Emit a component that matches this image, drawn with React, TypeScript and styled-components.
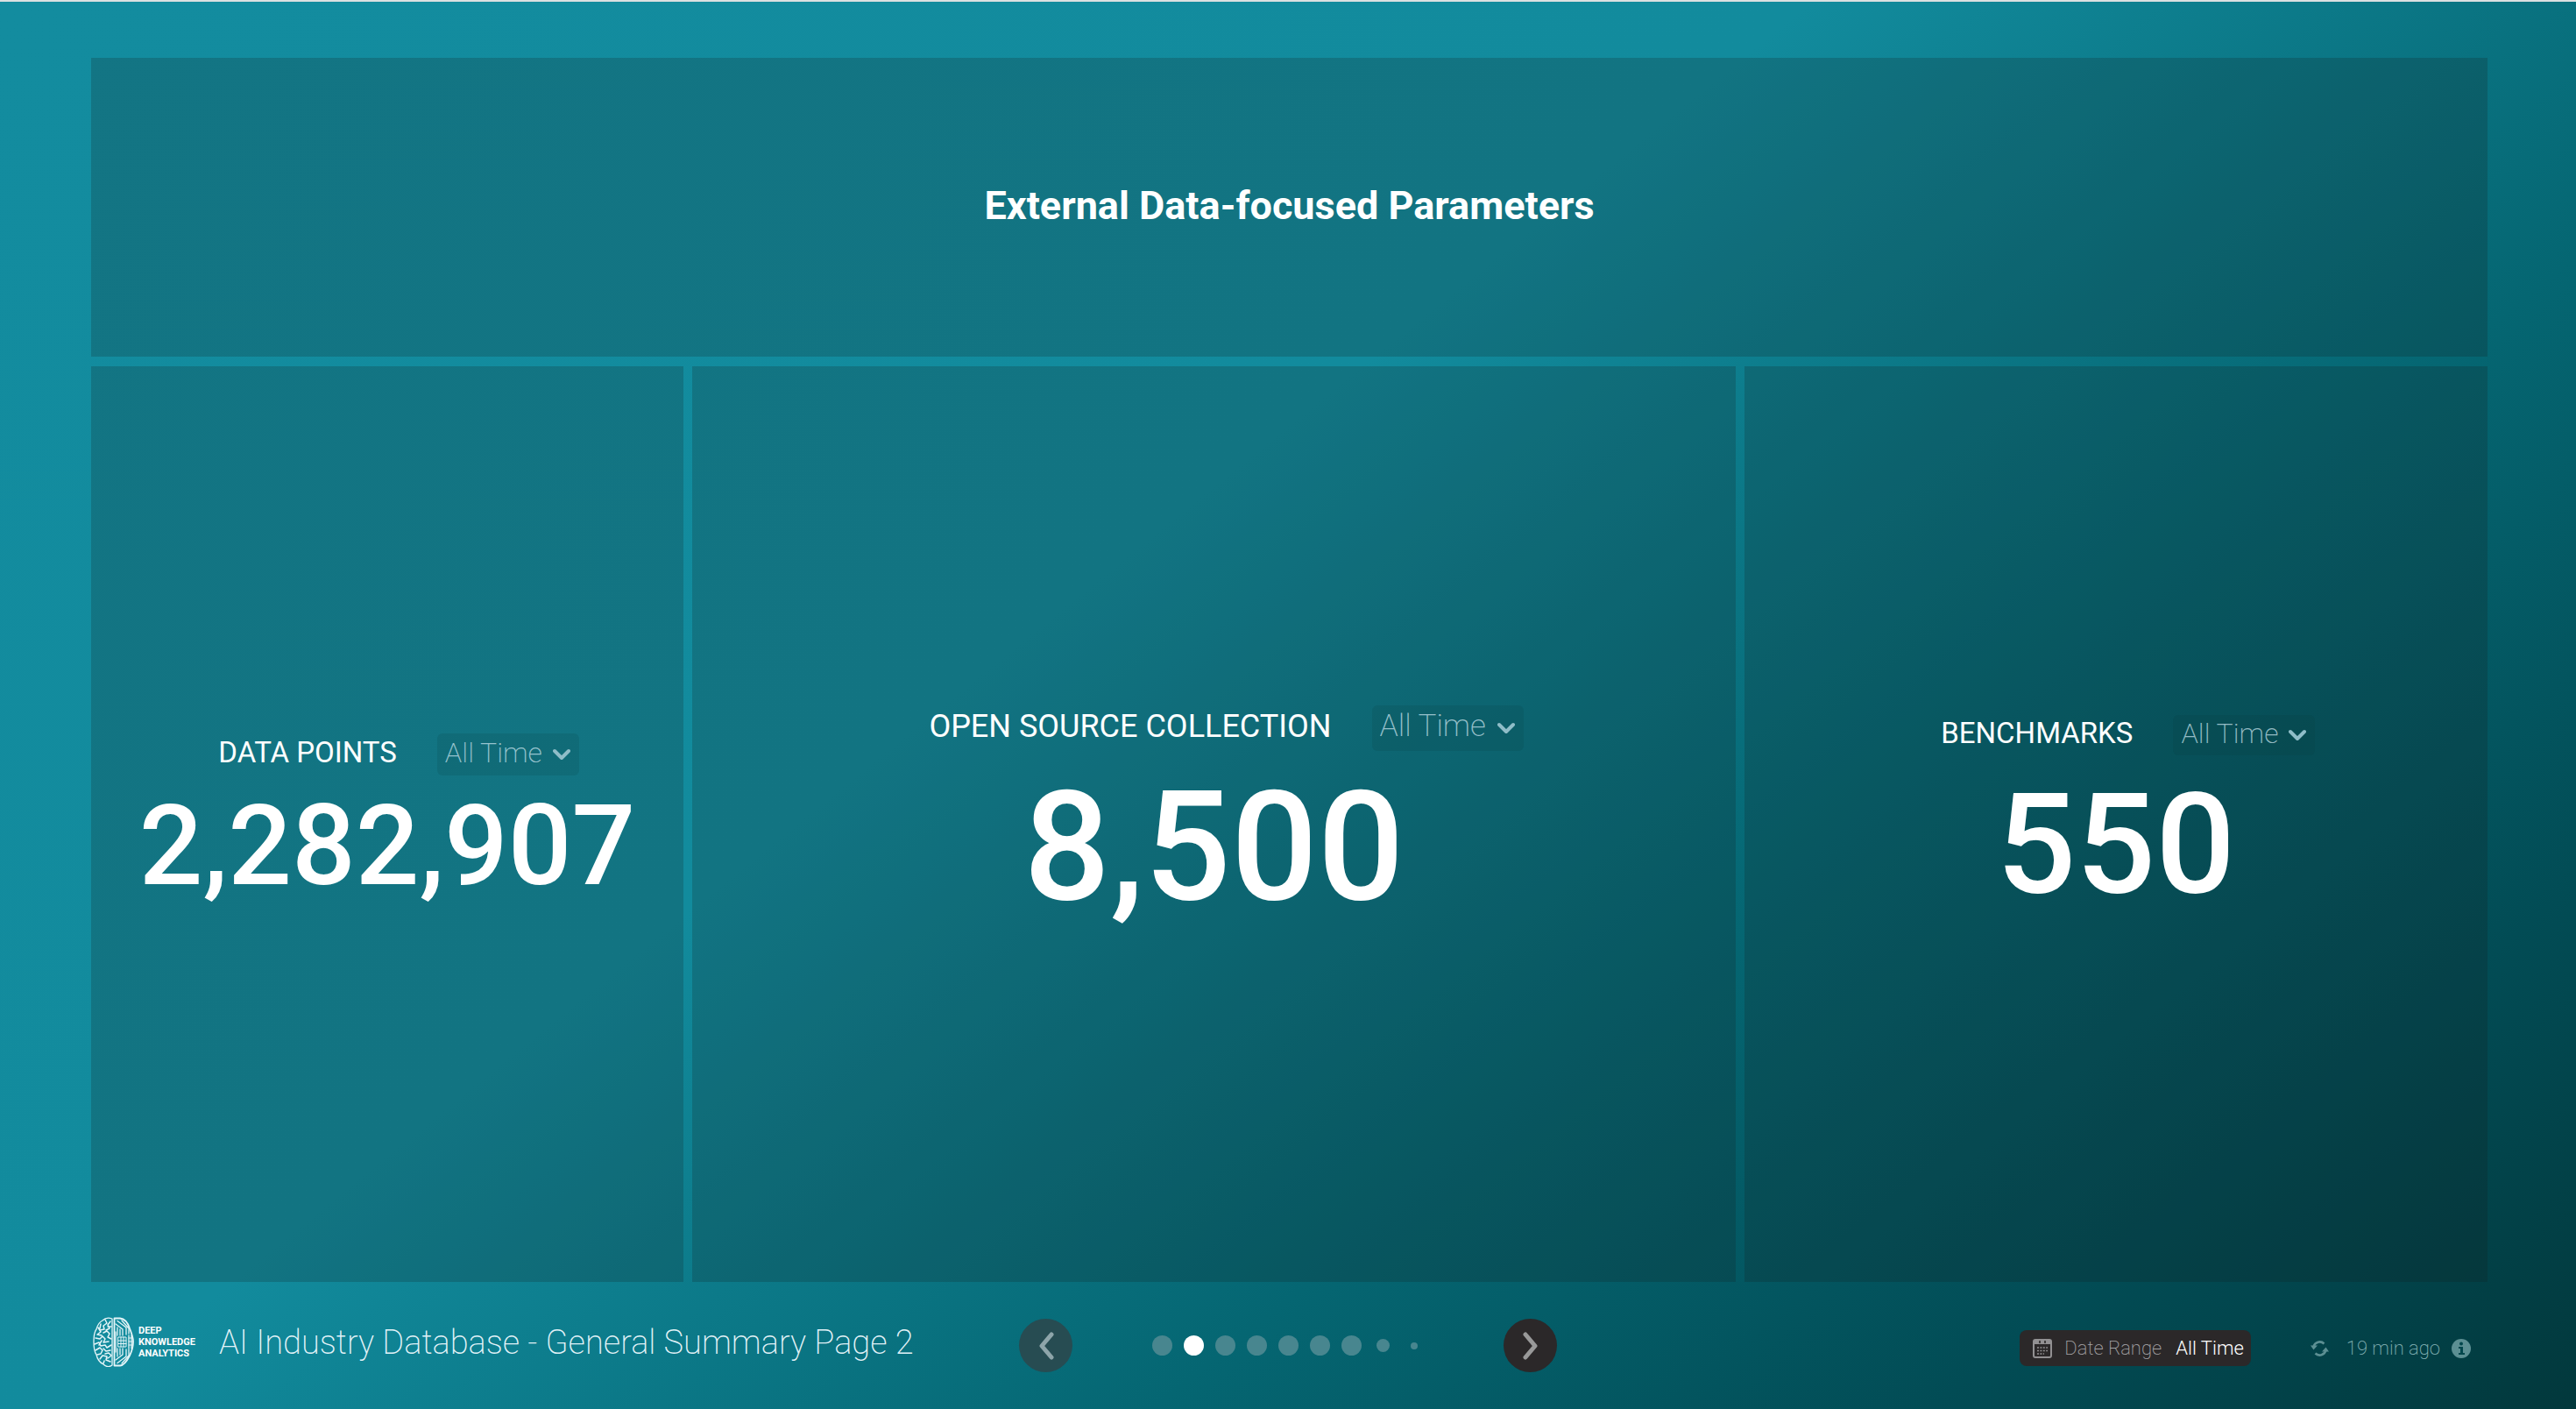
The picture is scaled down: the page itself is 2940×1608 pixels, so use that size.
import React from "react";
import styled, { createGlobalStyle } from "styled-components";

const GlobalStyle = createGlobalStyle`
  *, *::before, *::after { box-sizing: border-box; }
  body { margin: 0; font-family: Roboto, "Liberation Sans", sans-serif; color: #fff; }
  button, select { font: inherit; color: inherit; }
`;

const Page = styled.div`
  display: flex;
  flex-direction: column;
  min-height: 100vh;
  border-top: 2px solid #dbe0e1;
  background: linear-gradient(141deg, #138c9f 0%, #128b9d 42%, #056672 67%, #024c55 85%, #02383c 100%);
`;

const Board = styled.main`
  flex: 1;
  display: grid;
  grid-template-rows: 341fr 1045fr;
  gap: 11px;
  padding: 64px 101px 0 104px;
`;

const Panel = styled.section`
  display: flex;
  flex-direction: column;
  align-items: center;
  justify-content: center;
  background: rgba(20, 26, 26, 0.2);
`;

const Heading = styled.h1`
  margin: 0;
  padding-bottom: 4px;
  font-size: 45px;
  line-height: 52px;
  font-weight: 700;
`;

const Tiles = styled.div`
  display: grid;
  grid-template-columns: 676fr 1190fr 848fr;
  gap: 10px;
`;

type Size = "small" | "medium" | "large";

const sizes = {
  small: { label: 33, picker: 32, row: 48, value: 128, line: 160, indent: 26 },
  medium: { label: 33, picker: 32, row: 46, value: 160, line: 204, indent: 28 },
  large: { label: 36, picker: 35, row: 52, value: 174, line: 220, indent: 28 },
};

const TileHead = styled.div<{ $size: Size }>`
  display: flex;
  align-items: center;
  gap: 46px;
  height: ${(p) => sizes[p.$size].row}px;
  padding-left: ${(p) => sizes[p.$size].indent}px;
  font-size: ${(p) => sizes[p.$size].label}px;
`;

const TileLabel = styled.label`
  padding-bottom: 4px;
  font-weight: 400;
`;

const Picker = styled.span`
  display: grid;
  align-items: center;
  height: 100%;
  border-radius: 6px;
  background: rgba(10, 60, 60, 0.14);

  > * { grid-area: 1 / 1; }
`;

const PickerSelect = styled.select<{ $size: Size }>`
  appearance: none;
  height: 100%;
  padding: 0 41px 4px 9px;
  border: 0;
  background: none;
  font-size: ${(p) => sizes[p.$size].picker}px;
  font-weight: 200;
  color: rgba(205, 230, 240, 0.72);
`;

const PickerArrow = styled.svg`
  justify-self: end;
  width: 20px;
  height: 14px;
  margin-right: 10px;
  pointer-events: none;
`;

const Value = styled.div<{ $size: Size }>`
  font-size: ${(p) => sizes[p.$size].value}px;
  line-height: ${(p) => sizes[p.$size].line}px;
  font-weight: 500;
`;

const Footer = styled.footer`
  display: grid;
  grid-template-columns: 1fr auto 1fr;
  align-items: center;
  height: 145px;
  padding: 0 106px;
`;

const Brand = styled.div`
  display: flex;
  align-items: center;
  padding-bottom: 8px;
`;

const BrainMark = styled.svg`
  width: 47px;
  height: 57px;
`;

const BrandName = styled.div`
  margin-left: 5px;
  font-size: 11px;
  line-height: 13px;
  font-weight: 700;
  width: 64px;
`;

const PageTitle = styled.h2`
  margin: 0 0 0 28px;
  font-size: 38px;
  line-height: 44px;
  font-weight: 200;
  color: rgba(240, 250, 255, 0.95);
  white-space: nowrap;
`;

const Pager = styled.nav`
  display: flex;
  align-items: center;
  gap: 84px;
`;

const RoundButton = styled.button`
  display: grid;
  place-items: center;
  width: 61px;
  height: 61px;
  padding: 0;
  border: 0;
  border-radius: 50%;
  background: #2b2829;
  color: #999;

  &:disabled { background: #274c52; color: #8ea5aa; }
`;

const Dots = styled.div`
  display: flex;
`;

const DotButton = styled.button<{ $size: number }>`
  display: grid;
  place-items: center;
  width: 36px;
  height: 36px;
  padding: 0;
  border: 0;
  background: none;

  &::before {
    content: "";
    width: ${(p) => p.$size}px;
    height: ${(p) => p.$size}px;
    border-radius: 50%;
    background: #48868f;
  }
  &[aria-current]::before { background: #fff; }
`;

const Status = styled.div`
  display: flex;
  align-items: center;
  justify-self: end;
  margin: 6px 14px 0 0;
  font-size: 22px;
  line-height: 26px;
  font-weight: 200;
  color: #86b4b7;
`;

const DateRange = styled.button`
  display: flex;
  align-items: center;
  height: 41px;
  margin-right: 68px;
  padding: 0 8px 0 15px;
  border: 0;
  border-radius: 8px;
  background: #2b2829;
  color: #a5a3a5;
`;

const RangeLabel = styled.span`
  margin: 0 16px 0 14px;
`;

const RangeValue = styled.span`
  font-weight: 300;
  color: #fff;
`;

const Updated = styled.span`
  margin: 0 13px 0 20px;
`;

const Glyph = styled.svg`
  display: block;
`;

const Chevron = ({ flip }: { flip?: boolean }) => (
  <Glyph width="20" height="32" viewBox="0 0 20 32" fill="none" stroke="currentColor" strokeWidth="5" strokeLinecap="round" strokeLinejoin="round">
    <path d={flip ? "M4 3L15 16L4 29" : "M16 3L5 16L16 29"} />
  </Glyph>
);

const Brain = () => (
  <BrainMark viewBox="0 0 47 57" fill="none" stroke="#e4f5f8" strokeWidth="1.3" strokeLinecap="round" strokeLinejoin="round" aria-hidden="true">
    <path d="M22 2C18 .5 14 1 11 4C7 6 5 10 4 14C1 18 1 23 1 28C1 34 1 39 4 43C5 48 8 52 12 54C15 57 19 57 22 55Z" />
    <path d="M14 3l2 4l-4 3l1 4l-5 1M20 5l-3 4l2 4l-4 2M6 12l3 5l-4 3l5 1M12 18l4-2l3 3l-2 4l4 2M3 24l5 1l3-3l3 3l-2 4l6-1M2 31l5-2l2 4l5-1l2 3l5-3M3 38l5-3l3 3l-2 4l-4 1M12 36l3 3l5-1M14 42l4-1l3 3M8 48l3-4l5 1l-1 4l5 2M12 53l1-3M17 11l4 0M9 8l-1 5M10 27l-3 5M17 47l3-2" strokeWidth="1.5" />
    <path d="M24.500 1.500H31C36 2 40 7 42 13C44 18 46 23 46 28C46 35 44 40 42 44C39 50 36 55 31 55.500H24.500Z" strokeWidth="1.8" />
    <path d="M28 4.500L38 12V20M28 52.500L38 45V37M33 4L41 13V19M33 53L41 44V37M26 8L34 14V21M26 49L34 43V36M31 14V21M28 12V21M31 43V36M28 45V36M26 17V40M44 21V36M41 21V36" />
    <path d="M29 23H38V34H29ZM32 23V34M35 23V34M29 27H38M29 30.500H38M41 24H45M41 28H45M41 32H45" strokeWidth="1" />
  </BrainMark>
);

const tiles: { id: string; label: string; value: string; size: Size }[] = [
  { id: "points", label: "DATA POINTS", value: "2,282,907", size: "small" },
  { id: "source", label: "OPEN SOURCE COLLECTION", value: "8,500", size: "large" },
  { id: "bench", label: "BENCHMARKS", value: "550", size: "medium" },
];

const dots = [23, 23, 23, 23, 23, 23, 23, 15, 8];

export default function App() {
  return (
    <>
      <GlobalStyle />
      <Page>
        <Board>
          <Panel>
            <Heading>External Data-focused Parameters</Heading>
          </Panel>
          <Tiles>
            {tiles.map((t) => (
              <Panel key={t.id}>
                <TileHead $size={t.size}>
                  <TileLabel htmlFor={t.id}>{t.label}</TileLabel>
                  <Picker>
                    <PickerSelect id={t.id} $size={t.size}>
                      <option>All Time</option>
                    </PickerSelect>
                    <PickerArrow viewBox="0 0 20 14" fill="none" stroke="#8fbdc8" strokeWidth="4" strokeLinecap="round" strokeLinejoin="round" aria-hidden="true">
                      <path d="M2 3L10 11L18 3" />
                    </PickerArrow>
                  </Picker>
                </TileHead>
                <Value $size={t.size}>{t.value}</Value>
              </Panel>
            ))}
          </Tiles>
        </Board>
        <Footer>
          <Brand>
            <Brain />
            <BrandName>DEEP KNOWLEDGE ANALYTICS</BrandName>
            <PageTitle>AI Industry Database - General Summary Page 2</PageTitle>
          </Brand>
          <Pager aria-label="Pages">
            <RoundButton disabled aria-label="Previous page">
              <Chevron />
            </RoundButton>
            <Dots>
              {dots.map((d, i) => (
                <DotButton key={i} $size={d} aria-label={`Page ${i + 1}`} aria-current={i === 1 ? "page" : undefined} />
              ))}
            </Dots>
            <RoundButton aria-label="Next page">
              <Chevron flip />
            </RoundButton>
          </Pager>
          <Status>
            <DateRange>
              <Glyph width="22" height="22" viewBox="0 0 22 22" aria-hidden="true">
                <rect x="1" y="1" width="20" height="20" rx="2" fill="none" stroke="#929092" strokeWidth="2" />
                <path d="M1 1H21V6H1Z" fill="#929092" />
                <path d="M5 10H17M5 13.500H17M5 17H13" stroke="#929092" strokeWidth="1.600" strokeDasharray="2 1.400" />
                <path d="M8 2V5M14 2V5" stroke="#2b2829" strokeWidth="1.600" />
              </Glyph>
              <RangeLabel>Date Range</RangeLabel>
              <RangeValue>All Time</RangeValue>
            </DateRange>
            <Glyph width="21" height="20" viewBox="0 0 21 20" fill="none" stroke="#5c8f93" strokeWidth="2.600" aria-hidden="true">
              <path d="M3.500 8A7.200 7.200 0 0 1 15.500 4.500M17.500 12A7.200 7.200 0 0 1 5.500 15.500" />
              <path d="M0 6.500H8L3.500 11.500ZM21 13.500H13L17.500 8.500Z" fill="#5c8f93" stroke="none" />
            </Glyph>
            <Updated>19 min ago</Updated>
            <Glyph width="22" height="22" viewBox="0 0 22 22" aria-hidden="true">
              <circle cx="11" cy="11" r="11" fill="#5c8f93" />
              <circle cx="11" cy="5.500" r="2" fill="#03464c" />
              <path d="M8 9H13V16H15V18H8V16H10V11H8Z" fill="#03464c" />
            </Glyph>
          </Status>
        </Footer>
      </Page>
    </>
  );
}
